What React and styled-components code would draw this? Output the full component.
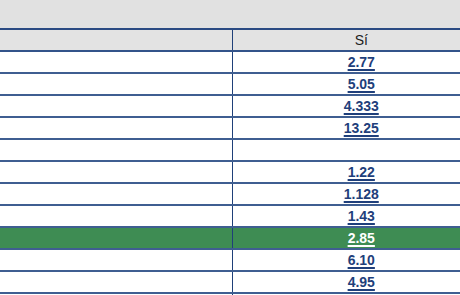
import React from 'react';
import styled, { createGlobalStyle, css } from 'styled-components';

const GlobalStyle = createGlobalStyle`
    html, body {
        margin: 0;
        padding: 0;
        background: #ffffff;
        overflow: hidden;
        font-family: "Liberation Sans", Arial, sans-serif;
    }
`;

const rows = [
    { value: '2.77' },
    { value: '5.05' },
    { value: '4.333' },
    { value: '13.25' },
    { value: '' },
    { value: '1.22' },
    { value: '1.128' },
    { value: '1.43' },
    { value: '2.85', highlight: true },
    { value: '6.10' },
    { value: '4.95' },
    { value: '' },
];

const App = () => {
    return (
        <>
            <GlobalStyle />
            <Page>
                <TopBar />
                <OddsTable>
                    <colgroup>
                        <col style={{ width: '232px' }} />
                        <col style={{ width: '258px' }} />
                    </colgroup>
                    <thead>
                        <tr>
                            <HeadCell />
                            <HeadCell>Sí</HeadCell>
                        </tr>
                    </thead>
                    <tbody>
                        {rows.map((row, i) => (
                            <Row key={i} highlight={row.highlight}>
                                <Cell />
                                <Cell>{row.value && <OddLink href="#" highlight={row.highlight}>{row.value}</OddLink>}</Cell>
                            </Row>
                        ))}
                    </tbody>
                </OddsTable>
            </Page>
        </>
    );
};

export default App;

const Page = styled.div`
    width: 490px;
    background: #ffffff;
`;

const TopBar = styled.div`
    height: 28px;
    background: #e1e1e1;
`;

const OddsTable = styled.table`
    width: 490px;
    border-collapse: collapse;
    table-layout: fixed;
    border-top: 2px solid #2a4a82;
`;

const HeadCell = styled.th`
    height: 20px;
    padding: 0;
    background: #e3e3e3;
    font-weight: normal;
    font-size: 14px;
    color: #1e1e1e;
    text-align: center;
    border-bottom: 2px solid #33538a;

    & + & {
        border-left: 1px solid #1f4079;
    }
`;

const Row = styled.tr`
    background: #ffffff;

    ${props => props.highlight && css`
        background: #3e8c53;
    `}
`;

const Cell = styled.td`
    height: 20px;
    padding: 0;
    text-align: center;
    line-height: 16px;
    border-bottom: 2px solid #3f5e91;

    & + & {
        border-left: 1px solid #1f4079;
    }
`;

const OddLink = styled.a`
    font-size: 14px;
    font-weight: bold;
    color: #1f3f7b;
    text-decoration: underline;
    text-decoration-thickness: 2px;
    text-underline-offset: 2px;

    ${props => props.highlight && css`
        color: #ffffff;
    `}
`;
